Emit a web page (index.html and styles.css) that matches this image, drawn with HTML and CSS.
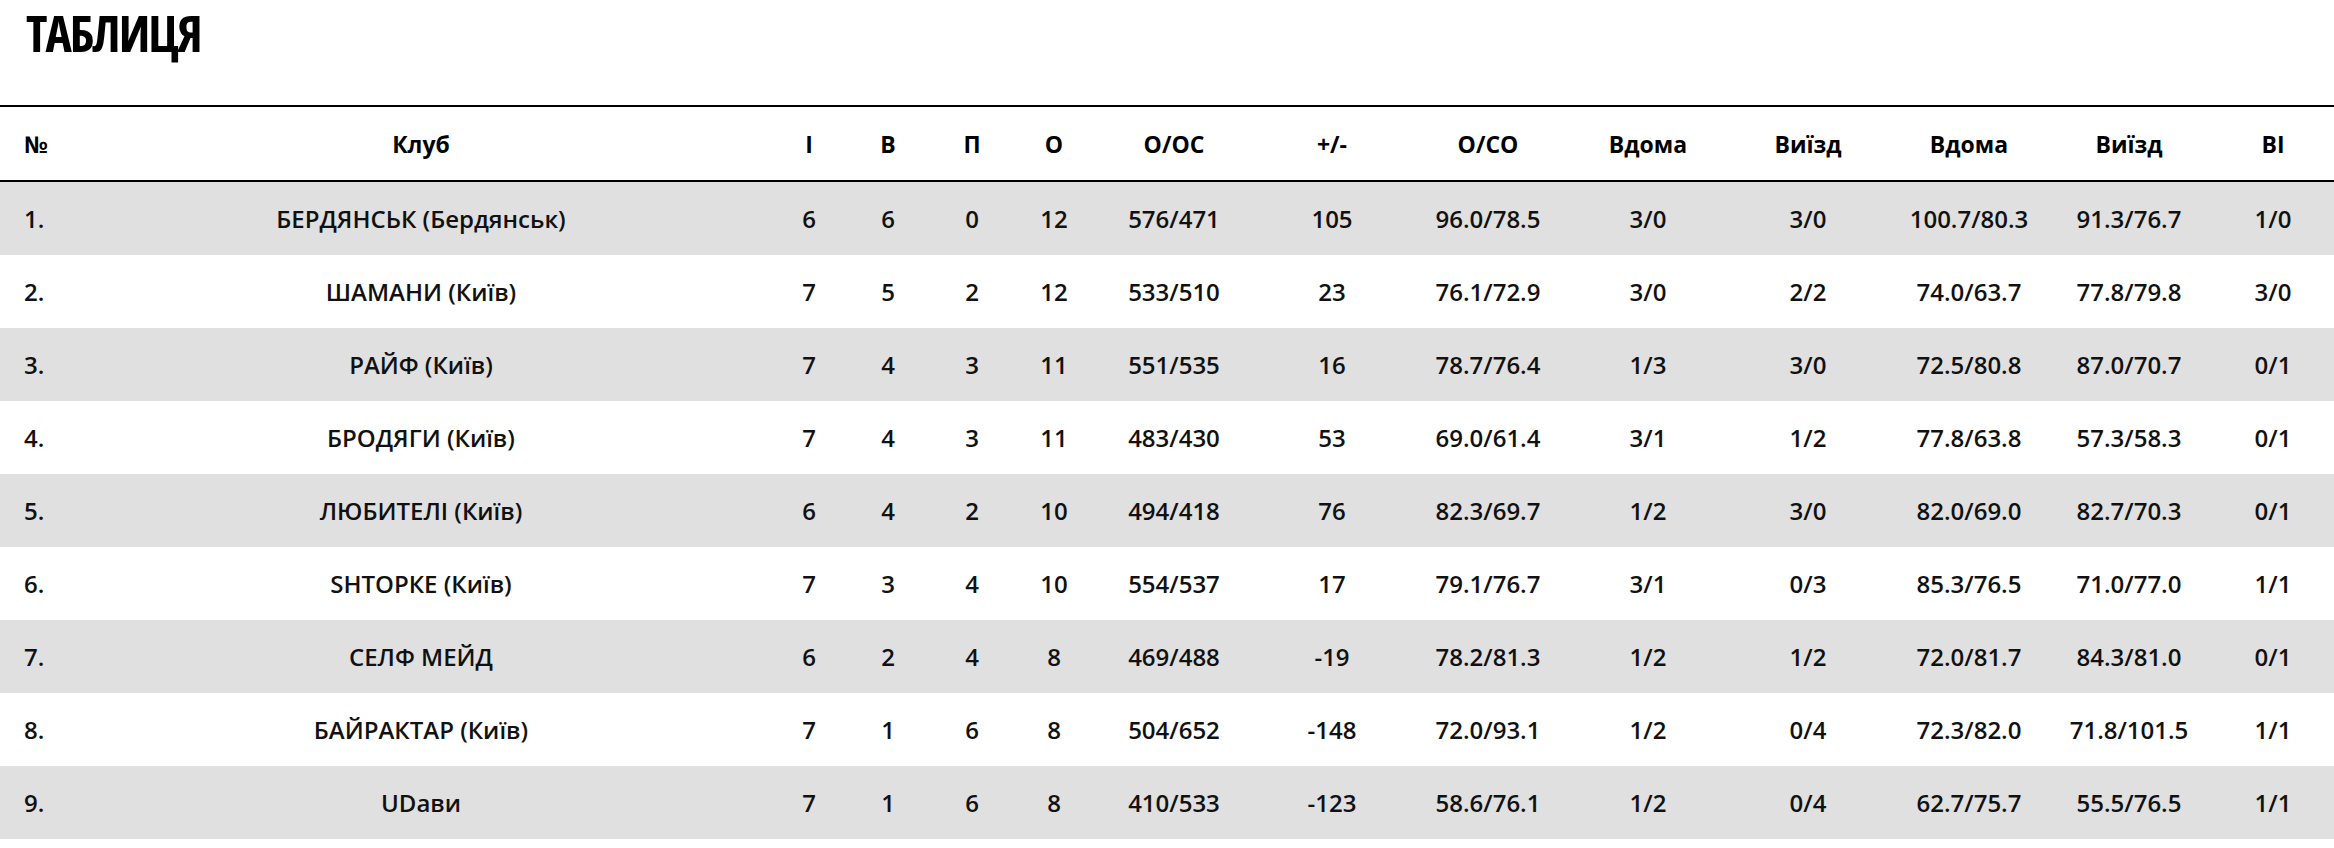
FILE: index.html
```html
<!DOCTYPE html>
<html lang="uk">
<head>
<meta charset="utf-8">
<title>Таблиця</title>
<link rel="stylesheet" href="styles.css">
</head>
<body>
<div class="page">
  <h1 class="title">ТАБЛИЦЯ</h1>
  <table class="standings">
    <colgroup>
      <col class="c-num"><col class="c-club"><col class="c-i"><col class="c-w"><col class="c-l"><col class="c-p">
      <col class="c-pts"><col class="c-diff"><col class="c-avg"><col class="c-h1"><col class="c-a1"><col class="c-h2"><col class="c-a2"><col class="c-vi">
    </colgroup>
    <thead>
      <tr><th class="num">№</th><th>Клуб</th><th>І</th><th>В</th><th>П</th><th>О</th><th>О/ОС</th><th>+/-</th><th>О/СО</th><th>Вдома</th><th>Виїзд</th><th>Вдома</th><th>Виїзд</th><th>ВІ</th></tr>
    </thead>
    <tbody>
      <tr><td class="num">1.</td><td>БЕРДЯНСЬК (Бердянськ)</td><td>6</td><td>6</td><td>0</td><td>12</td><td>576/471</td><td>105</td><td>96.0/78.5</td><td>3/0</td><td>3/0</td><td>100.7/80.3</td><td>91.3/76.7</td><td>1/0</td></tr>
      <tr><td class="num">2.</td><td>ШАМАНИ (Київ)</td><td>7</td><td>5</td><td>2</td><td>12</td><td>533/510</td><td>23</td><td>76.1/72.9</td><td>3/0</td><td>2/2</td><td>74.0/63.7</td><td>77.8/79.8</td><td>3/0</td></tr>
      <tr><td class="num">3.</td><td>РАЙФ (Київ)</td><td>7</td><td>4</td><td>3</td><td>11</td><td>551/535</td><td>16</td><td>78.7/76.4</td><td>1/3</td><td>3/0</td><td>72.5/80.8</td><td>87.0/70.7</td><td>0/1</td></tr>
      <tr><td class="num">4.</td><td>БРОДЯГИ (Київ)</td><td>7</td><td>4</td><td>3</td><td>11</td><td>483/430</td><td>53</td><td>69.0/61.4</td><td>3/1</td><td>1/2</td><td>77.8/63.8</td><td>57.3/58.3</td><td>0/1</td></tr>
      <tr><td class="num">5.</td><td>ЛЮБИТЕЛІ (Київ)</td><td>6</td><td>4</td><td>2</td><td>10</td><td>494/418</td><td>76</td><td>82.3/69.7</td><td>1/2</td><td>3/0</td><td>82.0/69.0</td><td>82.7/70.3</td><td>0/1</td></tr>
      <tr><td class="num">6.</td><td>SHТОРКЕ (Київ)</td><td>7</td><td>3</td><td>4</td><td>10</td><td>554/537</td><td>17</td><td>79.1/76.7</td><td>3/1</td><td>0/3</td><td>85.3/76.5</td><td>71.0/77.0</td><td>1/1</td></tr>
      <tr><td class="num">7.</td><td>СЕЛФ МЕЙД</td><td>6</td><td>2</td><td>4</td><td>8</td><td>469/488</td><td>-19</td><td>78.2/81.3</td><td>1/2</td><td>1/2</td><td>72.0/81.7</td><td>84.3/81.0</td><td>0/1</td></tr>
      <tr><td class="num">8.</td><td>БАЙРАКТАР (Київ)</td><td>7</td><td>1</td><td>6</td><td>8</td><td>504/652</td><td>-148</td><td>72.0/93.1</td><td>1/2</td><td>0/4</td><td>72.3/82.0</td><td>71.8/101.5</td><td>1/1</td></tr>
      <tr><td class="num">9.</td><td>UDави</td><td>7</td><td>1</td><td>6</td><td>8</td><td>410/533</td><td>-123</td><td>58.6/76.1</td><td>1/2</td><td>0/4</td><td>62.7/75.7</td><td>55.5/76.5</td><td>1/1</td></tr>
    </tbody>
  </table>
</div>
</body>
</html>
```
FILE: styles.css
```css
html, body {
  margin: 0;
  padding: 0;
  background: #ffffff;
}

.page {
  font-family: "Open Sans", "Noto Sans", sans-serif;
  color: #111111;
}

.title {
  margin: 0;
  padding: 8px 0 0 26px;
  font-family: "Open Sans", "Noto Sans", sans-serif;
  font-size: 50px;
  line-height: 50px;
  font-weight: 700;
  font-stretch: 75%;
  letter-spacing: -2px;
  color: #000000;
}

.standings {
  margin-top: 47px;
  width: 2334px;
  table-layout: fixed;
  border-collapse: collapse;
}

.c-num { width: 76px; }
.c-club { width: 690px; }
.c-i { width: 86px; }
.c-w { width: 72px; }
.c-l { width: 96px; }
.c-p { width: 68px; }
.c-pts { width: 172px; }
.c-diff { width: 144px; }
.c-avg { width: 168px; }
.c-h1 { width: 152px; }
.c-a1 { width: 168px; }
.c-h2 { width: 154px; }
.c-a2 { width: 166px; }
.c-vi { width: 122px; }

.standings thead tr {
  border-top: 2px solid #000000;
  border-bottom: 2px solid #000000;
}

.standings th {
  height: 73px;
  padding: 0;
  font-size: 23px;
  font-weight: 700;
  text-align: center;
  vertical-align: middle;
  color: #000000;
}

.standings td {
  height: 73px;
  padding: 0;
  font-size: 24px;
  font-weight: 600;
  text-align: center;
  vertical-align: middle;
  white-space: nowrap;
  color: #111111;
}

.standings tbody tr:nth-child(odd) {
  background: #e0e0e0;
}

.standings .num {
  text-align: left;
  padding-left: 24px;
}
```
